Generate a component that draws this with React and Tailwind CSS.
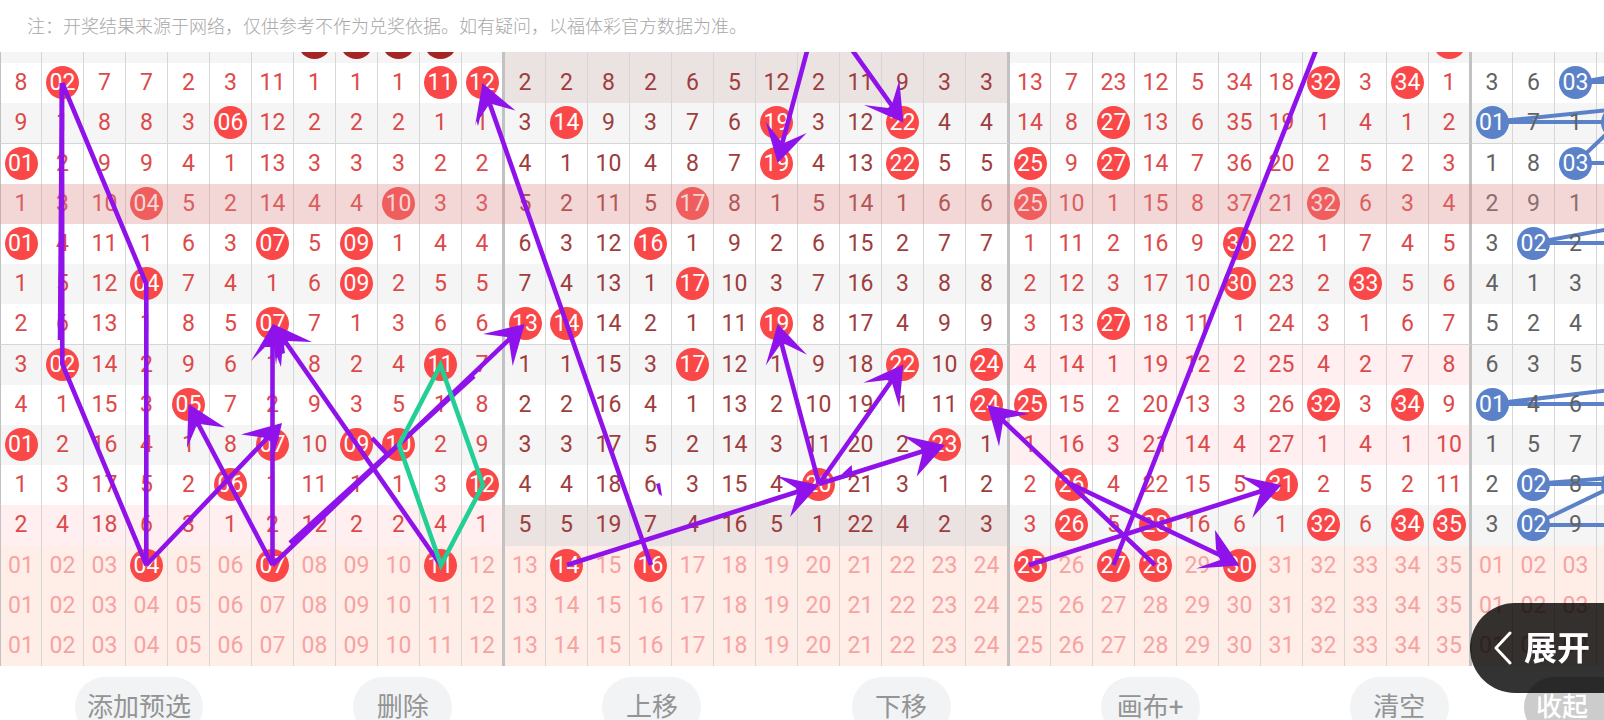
import React, { useState } from "react";

// A leading * marks a drawn number; groups (zone 1, 2, 3 and the back zone) are separated by |.
const HISTORY = [
  "8 *02 7 7 2 3 11 1 1 1 *11 *12 | 2 2 8 2 6 5 12 2 11 9 3 3 | 13 7 23 12 5 34 18 *32 3 *34 1 | 3 6 *03 -",
  "9 1 8 8 3 *06 12 2 2 2 1 1 | 3 *14 9 3 7 6 *19 3 12 *22 4 4 | 14 8 *27 13 6 35 19 1 4 1 2 | *01 7 1 *",
  "*01 2 9 9 4 1 13 3 3 3 2 2 | 4 1 10 4 8 7 *19 4 13 *22 5 5 | *25 9 *27 14 7 36 20 2 5 2 3 | 1 8 *03 -",
  "1 3 10 *04 5 2 14 4 4 *10 3 3 | 5 2 11 5 *17 8 1 5 14 1 6 6 | *25 10 1 15 8 37 21 *32 6 3 4 | 2 9 1 -",
  "*01 4 11 1 6 3 *07 5 *09 1 4 4 | 6 3 12 *16 1 9 2 6 15 2 7 7 | 1 11 2 16 9 *30 22 1 7 4 5 | 3 *02 2 -",
  "1 5 12 *04 7 4 1 6 *09 2 5 5 | 7 4 13 1 *17 10 3 7 16 3 8 8 | 2 12 3 17 10 *30 23 2 *33 5 6 | 4 1 3 -",
  "2 6 13 1 8 5 *07 7 1 3 6 6 | *13 *14 14 2 1 11 *19 8 17 4 9 9 | 3 13 *27 18 11 1 24 3 1 6 7 | 5 2 4 -",
  "3 *02 14 2 9 6 1 8 2 4 *11 7 | 1 1 15 3 *17 12 1 9 18 *22 10 *24 | 4 14 1 19 12 2 25 4 2 7 8 | 6 3 5 -",
  "4 1 15 3 *05 7 2 9 3 5 1 8 | 2 2 16 4 1 13 2 10 19 1 11 *24 | *25 15 2 20 13 3 26 *32 3 *34 9 | *01 4 6 -",
  "*01 2 16 4 1 8 *07 10 *09 *10 2 9 | 3 3 17 5 2 14 3 11 20 2 *23 1 | 1 16 3 21 14 4 27 1 4 1 10 | 1 5 7 -",
  "1 3 17 5 2 *06 1 11 1 1 3 *12 | 4 4 18 6 3 15 4 *20 21 3 1 2 | 2 *26 4 22 15 5 *31 2 5 2 11 | 2 *02 8 *",
  "2 4 18 6 3 1 2 12 2 2 4 1 | 5 5 19 7 4 16 5 1 22 4 2 3 | 3 *26 5 *28 16 6 1 *32 6 *34 *35 | 3 *02 9 -",
].map((line) => line.split(" | ").map((zone) => zone.split(" ")));

const ZONE_SIZES = [12, 12, 11, 4];
const ZONE_TEXT = ["text-[#dc4a4a]", "text-[#9e3d3d]", "text-[#dc4a4a]", "text-[#626262]"];
const SHADES = {
  1: { 1: "bg-[#ebe2e2]" },
  8: { 2: "bg-[#ffeff0]" },
  10: { 2: "bg-[#ffeff0]" },
  12: { 0: "bg-[#ffeff0]", 1: "bg-[#ebe2e2]" },
};

function edge(zone, i) {
  if (zone < 3 && i === ZONE_SIZES[zone] - 1) return "border-r-3 border-r-[#c2c2c2]";
  if (zone === 0 && i === 0) return "border-l border-r border-l-[#c2c2c2] border-r-[#d6d6d6]";
  return "border-r border-r-[#d6d6d6]";
}

function Ball({ color, children }) {
  return (
    <span className={`relative z-10 mx-auto flex size-[33px] items-center justify-center rounded-full text-white ${color}`}>
      {children}
    </span>
  );
}

function HistoryRow({ zones, index }) {
  const stripe = index % 2 === 0 && index !== 4 ? "bg-[#f5f5f5]" : "bg-white";
  const height = index % 5 === 2 ? "h-[41px]" : "h-10";
  const line = index === 2 || index === 7 ? "border-b border-b-[#d6d6d6]" : "";
  const marked =
    index === 4 ? "relative after:absolute after:inset-0 after:z-[15] after:bg-[#dc8787]/34" : "";
  return (
    <tr className={`${stripe} ${height} ${marked}`}>
      {zones.map((cells, z) =>
        cells.map((cell, i) => (
          <td
            key={`${z}-${i}`}
            className={`p-0 pb-0.5 text-center align-middle ${edge(z, i)} ${line} ${ZONE_TEXT[z]} ${SHADES[index]?.[z] ?? ""}`}
          >
            {cell[0] === "*" ? (
              <Ball color={z === 3 ? "bg-[#5b82c9]" : "bg-[#fa4848]"}>{cell.slice(1)}</Ball>
            ) : cell === "-" ? null : (
              <span className="relative z-10">{cell}</span>
            )}
          </td>
        ))
      )}
    </tr>
  );
}

function ClippedRow() {
  return (
    <tr className="h-10 bg-[#f5f5f5]">
      {ZONE_SIZES.map((size, z) =>
        Array.from({ length: size }, (_, i) => (
          <td key={`${z}-${i}`} className={`p-0 pb-0.5 align-middle ${edge(z, i)} ${z === 1 ? "bg-[#ebe2e2]" : ""}`}>
            {z === 0 && i >= 7 && i <= 10 && <Ball color="bg-[#a52525]" />}
            {z === 2 && i === 10 && <Ball color="bg-[#fa4848]" />}
          </td>
        ))
      )}
    </tr>
  );
}

function PickRow({ picked, onToggle }) {
  let number = 0;
  return (
    <tr className="h-10 bg-[#ffeee7]">
      {ZONE_SIZES.map((size, z) =>
        Array.from({ length: size }, (_, i) => {
          number += 1;
          const n = z === 3 ? i + 1 : number;
          const id = z === 3 ? `b${n}` : `${n}`;
          const on = picked.includes(id);
          const label = String(n).padStart(2, "0");
          return (
            <td key={id} className={`p-0 pb-0.5 text-center align-middle ${edge(z, i)}`}>
              {z === 3 && i === 3 ? null : (
                <button
                  type="button"
                  aria-pressed={on}
                  onClick={() => onToggle(id)}
                  className={`relative z-10 mx-auto flex size-[33px] items-center justify-center rounded-full ${
                    on ? "bg-[#fa4848] text-white" : "text-[#f6a3a3]"
                  }`}
                >
                  {label}
                </button>
              )}
            </td>
          );
        })
      )}
    </tr>
  );
}

const BACK_LINES = [
  "M1576 82H1610M1576 83L1610 77",
  "M1491 122H1617M1491 122L1610 110",
  "M1576 163H1610M1576 163L1618 123",
  "M1533 243H1610M1533 243L1610 229",
  "M1491 404H1610M1491 404L1610 390",
  "M1533 484H1617M1533 484L1610 478",
  "M1533 525H1610M1533 525L1618 484",
];

const PEN_LINES = [
  "M62 83L60 340",
  "M62 83L62.3 364L146.3 565V284L62.3 83",
  "M146.3 565L275 430",
  "M272.5 565L194 416",
  "M272.5 565V335",
  "M440.5 565L280 334",
  "M272.5 565L518 331",
  "M474 376L290 543",
  "M372 438L387 454",
  "M651 565L487 96",
  "M810 40L781 148",
  "M845 40L895 110",
  "M819 484L780 338",
  "M819 484L895 376",
  "M819 484L930 449",
  "M567 565L806 489",
  "M1155 565L995 413",
  "M1029 565L1268 489",
  "M1071 484L1228 559",
  "M1113.5 565L1320 40",
];

const PEN_HEADS = [
  "M282 423L241 434.5L266 438L272 443L273 457L278 440Z",
  "M188.5 404L225 427.5L200 424L196 427L187 448Z",
  "M273 324L312 342L288 341L284 346L285 353L282 354L281 367L277 357L276 365L274 347H265L251 361Z",
  "M524.7 324L483 334L507 337L509 341L512.7 366Z",
  "M482.5 83L515.5 110.5L492 104L488 106L480 118L478 126L476.5 121L475 126Z",
  "M777.7 163L765.7 121.7L780 140L784 143L806.7 133Z",
  "M903.3 122.5L864 105L888 108L892 104L899.3 80Z",
  "M777.7 324L807 354.7L785 344L780 345L765.7 365.5Z",
  "M903.3 364.5L863.3 382.7L887 380L892 383L899.3 407.5Z",
  "M945 445L902.7 435.5L921 448L922 455L916.7 476.5Z",
  "M819 485L776.7 476L796 488L797 494L790 517Z",
  "M987.5 405L1029 414L1006 418L1003 422L999 446.5Z",
  "M1281.5 485L1239.6 476L1259 488L1260 494L1252.3 518Z",
  "M1239.5 565.5L1215 530L1216 549L1220 560L1196 568.5Z",
  "M851.7 465L843 473L838 480L852.5 476Z",
  "M656 484L660 483L662 496L659 494Z",
];

function Board() {
  const [picked, setPicked] = useState(["4", "7", "11", "14", "16", "25", "27", "28", "30"]);
  const toggle = (id) => setPicked((p) => (p.includes(id) ? p.filter((x) => x !== id) : [...p, id]));
  return (
    <main className="relative isolate shrink-0 overflow-hidden">
      <table className="-mt-[29px] w-[1639px] table-fixed border-separate border-spacing-0 text-[23px] leading-none">
        <colgroup>
          {ZONE_SIZES.map((size, z) =>
            Array.from({ length: size }, (_, i) => {
              let width = "w-[42px]";
              if (z > 0 && i === 0) width = "w-[41px]";
              if (z === 1 && i === 11) width = "w-[44px]";
              if ((z === 0 && i === 11) || (z === 2 && i === 10)) width = "w-[43px]";
              return <col key={`${z}-${i}`} className={width} />;
            })
          )}
        </colgroup>
        <tbody>
          <ClippedRow />
          {HISTORY.map((zones, i) => (
            <HistoryRow key={i} zones={zones} index={i + 1} />
          ))}
          <PickRow picked={picked} onToggle={toggle} />
          <PickRow picked={[]} onToggle={toggle} />
          <PickRow picked={[]} onToggle={toggle} />
        </tbody>
      </table>
      <svg
        className="pointer-events-none absolute top-0 left-0 z-[5]"
        width="1639"
        height="614"
        viewBox="0 52 1639 614"
        fill="none"
        stroke="#5b82c9"
        strokeWidth="4"
        aria-hidden="true"
      >
        {BACK_LINES.map((d) => (
          <path key={d} d={d} />
        ))}
      </svg>
      <svg
        className="pointer-events-none absolute top-0 left-0 z-20"
        width="1639"
        height="614"
        viewBox="0 52 1639 614"
        fill="none"
        strokeWidth="4.6"
        aria-hidden="true"
      >
        {PEN_LINES.map((d) => (
          <path key={d} d={d} stroke="#9012ea" />
        ))}
        {PEN_HEADS.map((d) => (
          <path key={d} d={d} fill="#9012ea" />
        ))}
        <path d="M440.5 365L399 445L441 565L483 485Z" stroke="#22cf94" />
      </svg>
    </main>
  );
}

const ACTIONS = ["添加预选", "删除", "上移", "下移", "画布+", "清空"];

export default function App() {
  return (
    <div className="flex h-screen flex-col overflow-hidden bg-white font-[Roboto,'Noto_Sans_CJK_SC',sans-serif]">
      <header className="flex h-[52px] shrink-0 items-center px-[27px] pt-0.5">
        <p className="text-[18px] leading-6 font-light text-[#a8a8a8]">
          注：开奖结果来源于网络，仅供参考不作为兑奖依据。如有疑问，以福体彩官方数据为准。
        </p>
      </header>
      <Board />
      <footer className="flex shrink-0 pt-[11px] text-[26px] leading-none">
        <div className="flex flex-1 justify-around">
          {ACTIONS.map((label) => (
            <button
              key={label}
              type="button"
              className="h-[60px] min-w-[99px] rounded-full bg-[#f1f3f5] px-3 text-[#949494]"
            >
              {label}
            </button>
          ))}
        </div>
        <button type="button" className="h-[60px] w-20 rounded-l-full bg-[#cccccc] pr-4 text-right font-medium text-white">
          收起
        </button>
      </footer>
      <button
        type="button"
        className="fixed right-0 bottom-[27px] z-30 flex h-[90px] items-center gap-3 rounded-l-full bg-black/80 pr-3.5 pl-6 text-[33px] leading-none font-bold text-white"
      >
        <svg width="18" height="34" viewBox="0 0 18 34" fill="none" stroke="currentColor" strokeWidth="3" strokeLinecap="round" strokeLinejoin="round" aria-hidden="true">
          <path d="M16 2L2 17L16 32" />
        </svg>
        展开
      </button>
    </div>
  );
}
